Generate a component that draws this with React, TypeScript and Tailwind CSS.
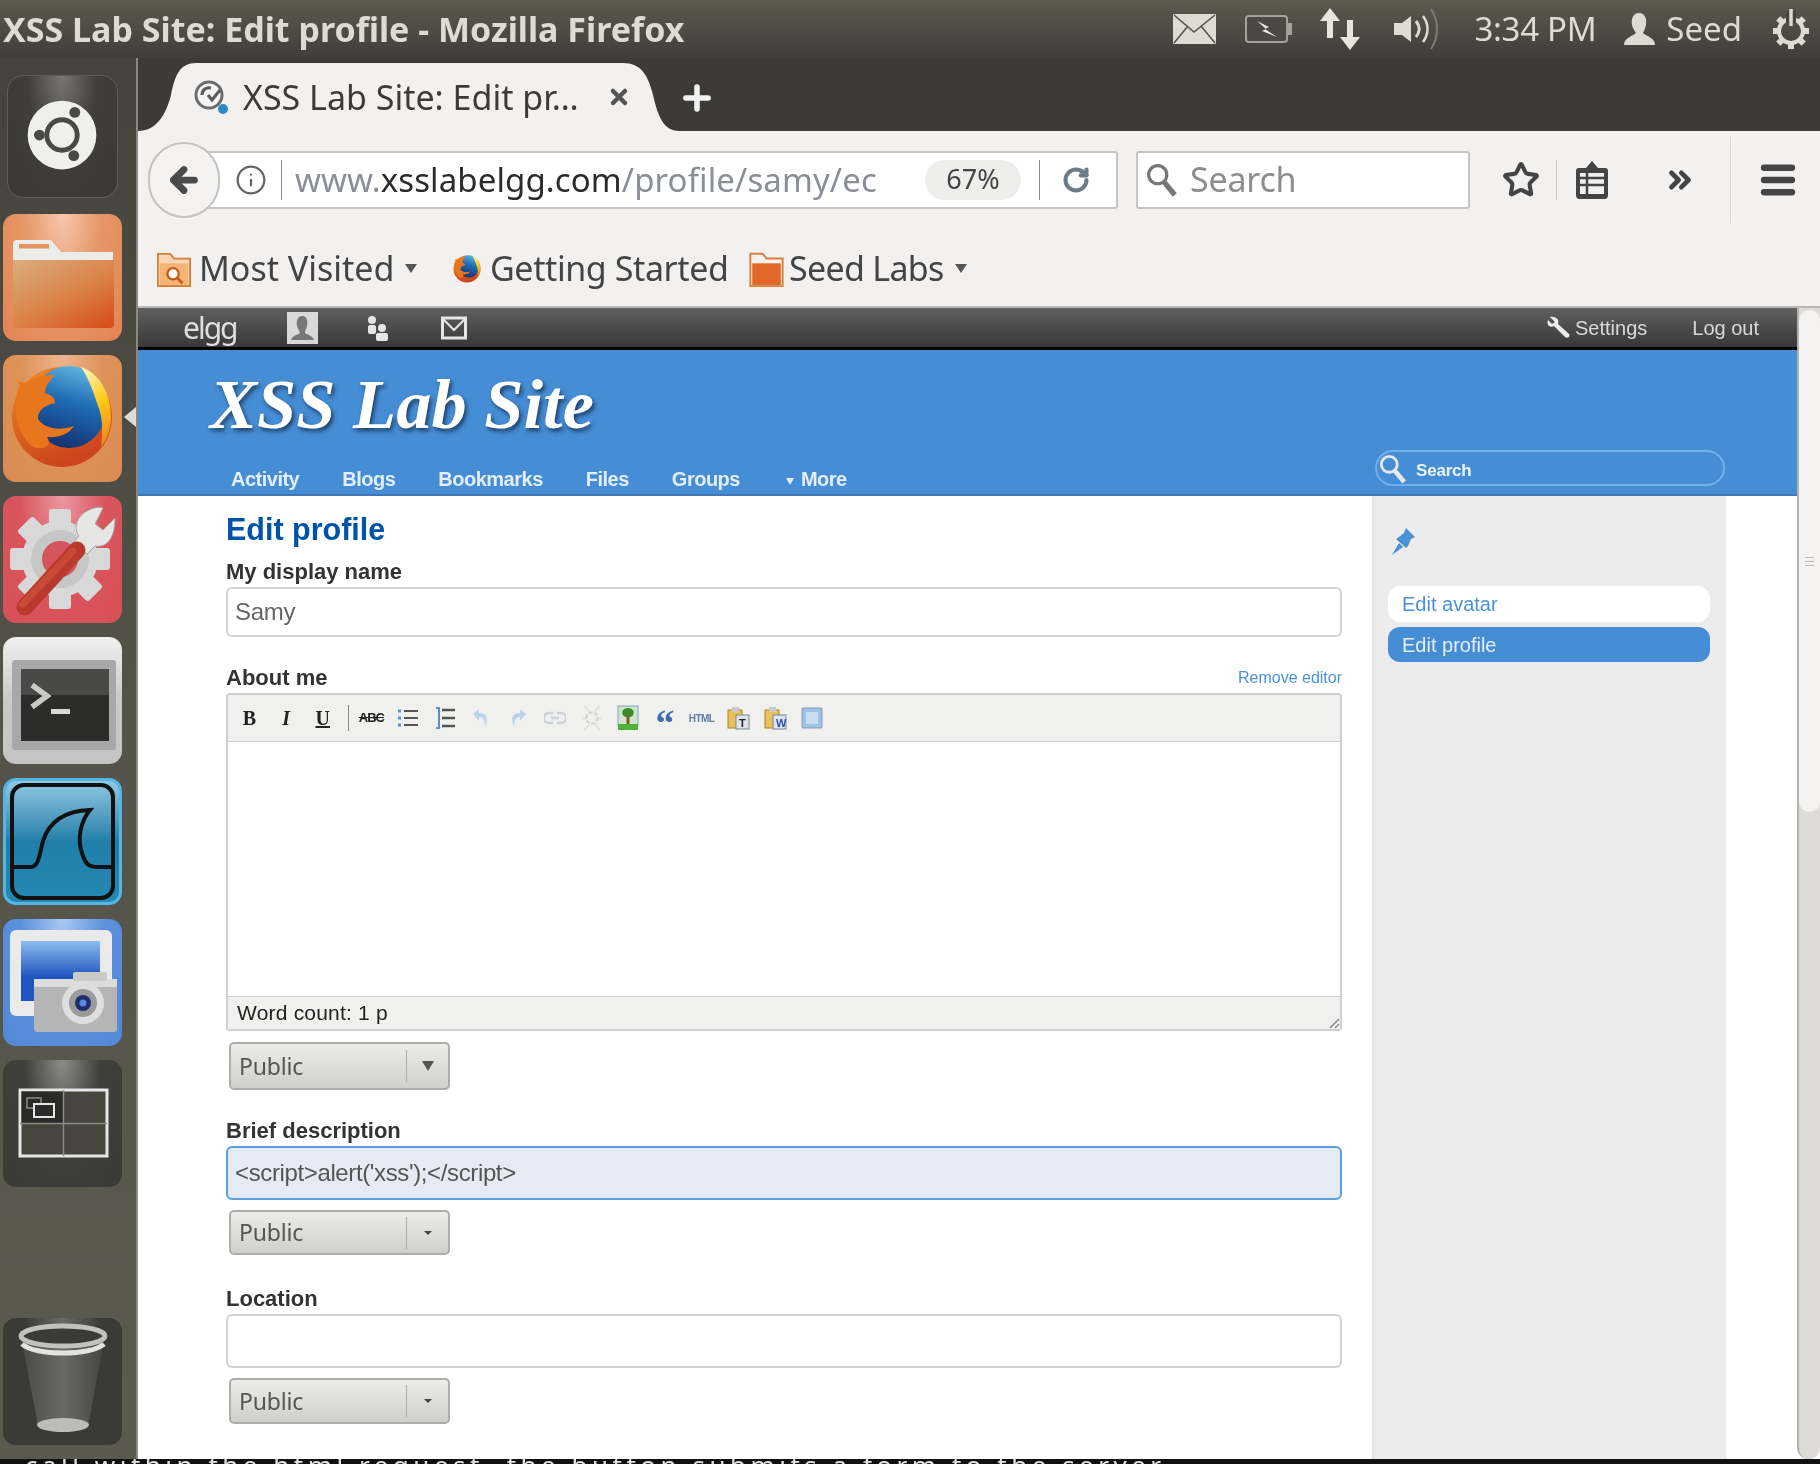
import type { ReactNode } from 'react'
import { Star, RotateCw, ChevronsRight, Info, Plus, Menu, ArrowLeft, X } from 'lucide-react'

const UI = "font-['Noto_Sans',sans-serif]"
const WEB = "font-['Liberation_Sans',Arial,sans-serif]"

function Tile({ className, children }: { className: string; children: ReactNode }) {
  return <div className={`h-[127px] w-[119px] shrink-0 overflow-hidden rounded-[13px] ${className}`}>{children}</div>
}

function TileSvg({ children }: { children: ReactNode }) {
  return (
    <svg viewBox="0 0 119 127" className="h-full w-full">
      {children}
    </svg>
  )
}

function Magnifier({ className, color }: { className: string; color: string }) {
  return (
    <svg viewBox="0 0 30 32" className={className}>
      <circle cx="11" cy="11" r="8.5" fill="none" stroke={color} strokeWidth="3" />
      <path d="M17 18L27 30" stroke={color} strokeWidth="5" />
    </svg>
  )
}

function FirefoxMark({ id }: { id: string }) {
  return (
    <>
      <defs>
        <linearGradient id={`${id}-b`} x1="0.7" y1="0" x2="0.4" y2="1">
          <stop offset="0" stopColor="#62b8e0" />
          <stop offset="0.45" stopColor="#1e6cb4" />
          <stop offset="1" stopColor="#14306f" />
        </linearGradient>
        <linearGradient id={`${id}-o`} x1="0" y1="0" x2="0.4" y2="1">
          <stop offset="0" stopColor="#ef8a1e" />
          <stop offset="1" stopColor="#cd451f" />
        </linearGradient>
        <linearGradient id={`${id}-y`} x1="0.3" y1="0" x2="0.6" y2="1">
          <stop offset="0" stopColor="#fff3b0" />
          <stop offset="0.5" stopColor="#fcc919" />
          <stop offset="1" stopColor="#ee8a1c" />
        </linearGradient>
      </defs>
      <circle cx="59" cy="62" r="50" fill={`url(#${id}-o)`} />
      <path d="M14 26L22 38L32 30Z" fill="#e8761d" />
      <ellipse cx="66" cy="52" rx="38" ry="41" fill={`url(#${id}-b)`} />
      <path d="M16 32C26 24 38 20 52 20C46 26 42 32 42 38C48 40 52 42 52 48C42 50 34 56 35 64C42 74 56 76 71 71C66 79 56 83 44 82C50 90 40 96 30 92C14 80 8 50 16 32Z" fill="#e8761d" />
      <path d="M78 12C96 18 108 38 108 62C108 74 104 84 98 92C100 76 100 62 94 48C90 36 86 24 78 12Z" fill={`url(#${id}-y)`} />
    </>
  )
}

function Launcher() {
  return (
    <aside className="relative flex w-[138px] shrink-0 flex-col gap-[14px] border-r-2 border-[#8a897f] bg-gradient-to-b from-[#44433d] via-[#55544a] to-[#5a5a4f] pb-[14px] pl-[3px] pt-[17px]">
      <div className="mb-[2px] ml-[4px] h-[123px] w-[111px] rounded-[16px] border border-[#5e5d58] bg-[radial-gradient(ellipse_at_50%_0%,#77766f_0%,#3f3e3b_45%,#3a3936_100%)]">
        <svg viewBox="0 0 111 123" className="h-full w-full">
          <circle cx="55" cy="60" r="35" fill="#efefee" />
          <circle cx="55" cy="60" r="15.5" fill="none" stroke="#4a4946" strokeWidth="5" />
          <circle cx="55" cy="60" r="20" fill="none" stroke="#efefee" strokeWidth="3" />
          <circle cx="32" cy="60" r="5.5" fill="#4a4946" />
          <circle cx="68" cy="37" r="5.5" fill="#4a4946" />
          <circle cx="67" cy="81" r="5.5" fill="#4a4946" />
        </svg>
      </div>

      <Tile className="bg-[radial-gradient(ellipse_at_50%_0%,#f6c7ad_0%,#e59767_45%,#e28552_100%)]">
        <TileSvg>
          <defs>
            <linearGradient id="fold" x1="0.1" y1="0" x2="0.9" y2="1">
              <stop offset="0" stopColor="#d9aa78" />
              <stop offset="0.55" stopColor="#db8146" />
              <stop offset="1" stopColor="#d6501c" />
            </linearGradient>
          </defs>
          <path d="M10 31C10 27 12 26 14 26H48L58 38H110V46H10Z" fill="#ececea" />
          <rect x="16" y="30" width="30" height="4.5" fill="#e5935f" />
          <path d="M10 46H111V110C111 112 110 114 107 114H14C11 114 10 112 10 110Z" fill="url(#fold)" />
        </TileSvg>
      </Tile>

      <Tile className="bg-[radial-gradient(ellipse_at_50%_0%,#eeb48e_0%,#dc9258_50%,#d98c52_100%)]">
        <TileSvg>
          <FirefoxMark id="ffl" />
        </TileSvg>
      </Tile>

      <Tile className="bg-[radial-gradient(ellipse_at_50%_0%,#eb98a0_0%,#d9565e_50%,#d74f55_100%)]">
        <TileSvg>
          <g fill="#d8d8d8">
            <circle cx="57" cy="63" r="38" />
            {[0, 45, 90, 135, 180, 225, 270, 315].map((a) => (
              <rect key={a} x="46" y="13" width="22" height="20" rx="3" transform={`rotate(${a} 57 63)`} />
            ))}
          </g>
          <circle cx="57" cy="63" r="29" fill="#c6c6c6" />
          <circle cx="57" cy="63" r="18" fill="#d4565c" />
          <path d="M84 15C74 20 70 32 76 40L71 46L84 58L92 50C104 52 112 42 112 22L100 34L92 28L100 12C96 10 90 12 84 15Z" fill="#e6e6e4" stroke="#a9a9a7" strokeWidth="1" />
          <path d="M22 111L74 54" stroke="#b83a2c" strokeWidth="17" strokeLinecap="round" />
          <path d="M20 108L70 55" stroke="#c94a36" strokeWidth="7" strokeLinecap="round" />
        </TileSvg>
      </Tile>

      <Tile className="bg-gradient-to-b from-[#f0f0f0] via-[#c9c9c9] to-[#c4c4c4]">
        <TileSvg>
          <rect x="9" y="23" width="104" height="90" rx="3" fill="#a8a8a8" />
          <rect x="18" y="32" width="88" height="72" fill="#2c2c2b" />
          <rect x="18" y="32" width="88" height="26" fill="#494947" />
          <path d="M29 48L44 59L29 70" fill="none" stroke="#c9c9c7" strokeWidth="5.5" />
          <rect x="48" y="72" width="19" height="5" fill="#d9d9d7" />
        </TileSvg>
      </Tile>

      <Tile className="border-[3px] border-[#55b6e6] bg-gradient-to-b from-[#8fc9e2] via-[#1f7fa9] to-[#2488b4]">
        <svg viewBox="0 0 113 121" className="h-full w-full">
          <rect x="6" y="4" width="101" height="113" rx="12" fill="none" stroke="#111" strokeWidth="4" />
          <path d="M6 86H24C33 86 33 75 37 60C43 41 58 30 84 29C75 40 70 58 77 75C80 84 84 86 92 86H107" fill="none" stroke="#111" strokeWidth="4" />
        </svg>
      </Tile>

      <Tile className="bg-[radial-gradient(ellipse_at_50%_0%,#a9c9f2_0%,#5a90dc_50%,#5288d6_100%)]">
        <TileSvg>
          <defs>
            <linearGradient id="scr" x1="0" y1="0" x2="0" y2="1">
              <stop offset="0" stopColor="#8dbcee" />
              <stop offset="0.6" stopColor="#1f55c0" />
            </linearGradient>
          </defs>
          <rect x="7" y="11" width="102" height="86" rx="6" fill="#eaeaea" />
          <rect x="18" y="22" width="79" height="60" fill="url(#scr)" />
          <rect x="31" y="60" width="83" height="53" rx="3" fill="#b5b5b5" />
          <rect x="31" y="60" width="83" height="8" fill="#dcdcdc" />
          <rect x="70" y="53" width="34" height="9" rx="2" fill="#c9c9c9" />
          <circle cx="80" cy="84" r="21" fill="#dedede" />
          <circle cx="80" cy="84" r="14" fill="#9b9b9b" />
          <circle cx="80" cy="84" r="8" fill="#1c2f6b" />
          <circle cx="80" cy="84" r="3.5" fill="#5a86e0" />
        </TileSvg>
      </Tile>

      <Tile className="bg-[radial-gradient(ellipse_at_50%_0%,#8c8c88_0%,#3f3f3c_45%,#3a3a37_100%)]">
        <TileSvg>
          <rect x="17" y="30" width="87" height="66" fill="#46463f" stroke="#e6e6e6" strokeWidth="3" />
          <rect x="18.5" y="31.5" width="42" height="32" fill="#2a2a28" />
          <path d="M60.5 30V96M17 63.5H104" stroke="#8a8a86" strokeWidth="1.5" />
          <rect x="24" y="38" width="14" height="10" fill="none" stroke="#8a8a86" strokeWidth="1.5" />
          <rect x="31" y="44" width="20" height="13" fill="#2a2a28" stroke="#e6e6e6" strokeWidth="2" />
        </TileSvg>
      </Tile>

      <Tile className="mt-auto bg-[radial-gradient(ellipse_at_50%_0%,#6b6b67_0%,#3a3a37_45%,#3a3a37_100%)]">
        <TileSvg>
          <defs>
            <linearGradient id="bin" x1="0" y1="0" x2="1" y2="0">
              <stop offset="0" stopColor="#4a4a45" />
              <stop offset="0.5" stopColor="#6a6a64" />
              <stop offset="1" stopColor="#45453f" />
            </linearGradient>
          </defs>
          <path d="M18 18L35 108H85L102 18Z" fill="url(#bin)" />
          <ellipse cx="60" cy="107" rx="26" ry="7" fill="#bdbdb8" />
          <ellipse cx="60" cy="18" rx="42" ry="10" fill="#3a3a37" stroke="#c2c2bd" strokeWidth="5" />
          <path d="M19 26C32 38 88 38 101 26" fill="none" stroke="#e2e2de" strokeWidth="5" />
        </TileSvg>
      </Tile>

      <div className="absolute left-[124px] top-[349px] h-0 w-0 border-y-[10px] border-r-[12px] border-y-transparent border-r-[#dcdcd8]" />
    </aside>
  )
}

function PanelGear() {
  return (
    <svg viewBox="0 0 38 40" className="ml-[30px] mr-[10px] h-[40px] w-[38px]">
      <g fill="#dedbd3">
        {[45, 90, 135, 180, 225, 270, 315].map((a) => (
          <rect key={a} x="16" y="4" width="6" height="7" transform={`rotate(${a} 19 22)`} />
        ))}
      </g>
      <circle cx="19" cy="22" r="12" fill="none" stroke="#dedbd3" strokeWidth="4" />
      <rect x="14" y="2" width="10" height="12" fill="#46453f" />
      <path d="M19 0V17" stroke="#dedbd3" strokeWidth="3.5" />
    </svg>
  )
}

function TopPanel() {
  return (
    <header className={`flex h-[58px] shrink-0 items-center bg-gradient-to-b from-[#5d5a4e] to-[#3f3e39] pl-[3px] text-[#dfdbd2] ${UI}`}>
      <span className="whitespace-nowrap text-[34px] font-bold">XSS Lab Site: Edit profile - Mozilla Firefox</span>
      <div className="ml-auto flex items-center">
        <svg viewBox="0 0 43 30" className="h-[30px] w-[43px]">
          <rect width="43" height="30" rx="1" fill="#dedbd3" />
          <path d="M1 1L21 18L42 1M1 29L15 12M42 29L28 12" fill="none" stroke="#55534b" strokeWidth="1.6" />
        </svg>
        <svg viewBox="0 0 48 30" className="ml-[29px] h-[30px] w-[48px]">
          <rect x="1" y="2" width="41" height="26" rx="3" fill="#4a4943" stroke="#a3a198" strokeWidth="2" />
          <rect x="42" y="9" width="5" height="12" fill="#a3a198" />
          <path d="M12 7L24 13L20 15L32 23L17 17L21 15Z" fill="#e8e5dd" />
        </svg>
        <svg viewBox="0 0 42 42" className="ml-[27px] h-[42px] w-[42px]">
          <path d="M10 0L20 13H13V30H7V13H0Z M30 42L20 29H27V12H33V29H40Z" fill="#e8e5dd" />
        </svg>
        <svg viewBox="0 0 45 44" className="ml-[32px] h-[44px] w-[45px]">
          <path d="M0 16H8L17 9V35L8 28H0Z" fill="#dedbd3" />
          <path d="M22 14C26 19 26 25 22 30" fill="none" stroke="#dedbd3" strokeWidth="3" />
          <path d="M29 9C35 17 35 27 29 35" fill="none" stroke="#dedbd3" strokeWidth="2.5" />
          <path d="M37 2C45 14 45 30 37 42" fill="none" stroke="#7d7b73" strokeWidth="2" />
        </svg>
        <span className="ml-[36px] whitespace-nowrap text-[33px] tracking-[-0.3px]">3:34 PM</span>
        <svg viewBox="0 0 31 32" className="ml-[28px] h-[32px] w-[31px]">
          <path d="M15 0C21 0 23 6 22 12C21 16 20 18 19 20C24 24 31 25 31 32H0C0 25 7 24 12 20C11 18 9 16 8 12C7 6 9 0 15 0Z" fill="#dedbd3" />
        </svg>
        <span className="ml-[11px] text-[33px]">Seed</span>
        <PanelGear />
      </div>
    </header>
  )
}

function TabStrip() {
  return (
    <div className={`flex h-[73px] shrink-0 items-end bg-[#3c3b37] ${UI}`}>
      <div className="relative flex h-[68px] w-[541px] items-center pl-[56px]">
        <svg viewBox="0 0 541 68" className="absolute inset-0 h-full w-full">
          <path d="M0 68C18 68 28 52 33 32C37 12 42 0 58 0L485 0C503 0 510 12 515 32C520 54 526 68 541 68Z" fill="#f2f1f0" />
        </svg>
        <svg viewBox="0 0 34 38" className="relative h-[38px] w-[34px]">
          <circle cx="15" cy="17" r="13" fill="#f4f4f4" stroke="#6c6c6c" strokeWidth="3" />
          <path d="M8 17C8 12 12 9 17 10M14 17L18 22L26 12" fill="none" stroke="#5a5a5a" strokeWidth="3" />
          <circle cx="29" cy="31" r="5" fill="#2f88c8" />
        </svg>
        <span className="relative ml-[15px] w-[345px] whitespace-nowrap text-[34px] text-[#3c3b37]">XSS Lab Site: Edit pr…</span>
        <X className="relative ml-[19px] h-[24px] w-[24px] text-[#555]" strokeWidth={4.5} />
      </div>
      <Plus className="mb-[14px] ml-[-1px] h-[38px] w-[38px] text-[#f3f3f3]" strokeWidth={3.5} />
    </div>
  )
}

function NavBar() {
  return (
    <div className={`flex h-[97px] shrink-0 items-center bg-[#f2f1f0] pl-[10px] ${UI}`}>
      <div className="z-10 flex h-[76px] w-[72px] shrink-0 items-center justify-center rounded-full border-2 border-[#c4c3c0] bg-[#f4f3f2]">
        <ArrowLeft className="h-[40px] w-[36px] text-[#4a4a4a]" strokeWidth={4.5} />
      </div>
      <div className="-ml-[20px] flex h-[58px] w-[918px] items-center rounded-[3px] border-2 border-[#c6c5c1] bg-white pl-[33px]">
        <Info className="h-[34px] w-[32px] text-[#666]" strokeWidth={1.7} />
        <div className="ml-[14px] h-[40px] w-[1px] bg-[#8c8c8c]" />
        <span className="ml-[13px] w-[582px] overflow-hidden whitespace-nowrap text-[33px] tracking-[0.1px] text-[#8a8f96]">
          www.<span className="text-[#2b2b2b]">xsslabelgg.com</span>/profile/samy/ec
        </span>
        <span className="ml-[48px] flex h-[40px] w-[96px] items-center justify-center rounded-full bg-[#eeeeed] text-[27px] text-[#444]">67%</span>
        <div className="ml-[18px] h-[40px] w-[1px] bg-[#8c8c8c]" />
        <RotateCw className="ml-[22px] h-[32px] w-[28px] text-[#6a7b8a]" strokeWidth={3.5} />
      </div>
      <div className="ml-[18px] flex h-[58px] w-[334px] items-center rounded-[3px] border-2 border-[#c6c5c1] bg-white pl-[8px]">
        <Magnifier className="h-[36px] w-[32px]" color="#777" />
        <span className="ml-[12px] text-[34px] tracking-[-0.2px] text-[#8d8d8d]">Search</span>
      </div>
      <Star className="ml-[32px] h-[38px] w-[38px] text-[#444]" strokeWidth={2.6} />
      <div className="ml-[16px] h-[40px] w-[1px] bg-[#cfcecb]" />
      <svg viewBox="0 0 32 38" className="ml-[19px] h-[38px] w-[32px]">
        <path d="M16 0L22 7H29C31 7 32 8 32 10V34C32 36 31 38 29 38H3C1 38 0 36 0 34V10C0 8 1 7 3 7H10Z" fill="#444" />
        <path d="M4 12H28V33H4Z" fill="#f2f1f0" />
        <path d="M4 17H28M4 24H28M11 12V33" stroke="#444" strokeWidth="2.5" />
      </svg>
      <ChevronsRight className="ml-[55px] h-[36px] w-[34px] text-[#444]" strokeWidth={3.4} />
      <div className="ml-[33px] h-[86px] w-[1px] bg-[#dcdbd8]" />
      <Menu className="ml-[26px] h-[44px] w-[42px] text-[#444]" strokeWidth={3.6} />
    </div>
  )
}

function Caret() {
  return <span className="ml-[10px] h-0 w-0 border-x-[6px] border-t-[9px] border-x-transparent border-t-[#555]" />
}

function FolderIcon({ className, badge }: { className: string; badge?: boolean }) {
  return (
    <svg viewBox="0 0 36 40" className={className}>
      <path d="M1 4H14L18 9H35V38H1Z" fill={badge ? '#f9d7b6' : '#f4f2ee'} stroke="#d8803a" strokeWidth="2" />
      <rect x="3" y="14" width="30" height="23" fill={badge ? '#f5b375' : '#e2682a'} />
      {badge ? <circle cx="17" cy="25" r="6" fill="#fff" stroke="#c8571c" strokeWidth="2.5" /> : null}
      {badge ? <path d="M21 29L27 35" stroke="#c8571c" strokeWidth="3" /> : null}
    </svg>
  )
}

function BookmarkBar() {
  return (
    <div className={`flex h-[80px] shrink-0 items-center border-b-2 border-[#b9b8b4] bg-[#f2f1f0] pl-[19px] pt-[3px] text-[#444] ${UI}`}>
      <FolderIcon className="h-[40px] w-[34px]" badge />
      <span className="ml-[8px] w-[196px] whitespace-nowrap text-[34px]">Most Visited</span>
      <Caret />
      <svg viewBox="0 0 118 124" className="ml-[34px] h-[38px] w-[32px]">
        <FirefoxMark id="ffb" />
      </svg>
      <span className="ml-[7px] w-[237px] whitespace-nowrap text-[34px] tracking-[-0.4px]">Getting Started</span>
      <FolderIcon className="ml-[21px] h-[38px] w-[37px]" />
      <span className="ml-[4px] w-[156px] whitespace-nowrap text-[34px] tracking-[-0.7px]">Seed Labs</span>
      <Caret />
    </div>
  )
}

function ToolCell({ children }: { children: ReactNode }) {
  return <div className="flex w-[36.7px] shrink-0 items-center justify-center">{children}</div>
}

function PasteIcon({ letter, color }: { letter: string; color: string }) {
  return (
    <svg viewBox="0 0 24 24" className="h-[24px] w-[24px]">
      <rect x="2" y="4" width="14" height="18" fill="#e8c258" stroke="#a8842c" />
      <rect x="6" y="1" width="7" height="5" fill="#c9c9c9" />
      <rect x="10" y="9" width="13" height="14" fill="#dfe4ec" stroke="#7a8598" />
      <text x="13" y="21" fontSize="11" fontWeight="700" fill={color}>{letter}</text>
    </svg>
  )
}

function EditorToolbar() {
  return (
    <div className="flex h-[47px] items-center border-b border-[#cfcfcf] bg-[#f0f0ee] pl-[3px] text-[#222]">
      <ToolCell><span className="font-['Liberation_Serif',serif] text-[20px] font-bold">B</span></ToolCell>
      <ToolCell><span className="font-['Liberation_Serif',serif] text-[20px] font-bold italic">I</span></ToolCell>
      <ToolCell><span className="font-['Liberation_Serif',serif] text-[20px] font-bold underline">U</span></ToolCell>
      <div className="ml-[7px] mr-[4px] h-[26px] w-[1px] bg-[#888]" />
      <ToolCell><span className="text-[13px] font-bold tracking-[-1px] line-through">ABC</span></ToolCell>
      <ToolCell>
        <svg viewBox="0 0 22 22" className="h-[22px] w-[22px]">
          <path d="M7 4H21M7 11H21M7 18H21" stroke="#555" strokeWidth="2" />
          <path d="M1 4H4M1 11H4M1 18H4" stroke="#5a8fd0" strokeWidth="3" />
        </svg>
      </ToolCell>
      <ToolCell>
        <svg viewBox="0 0 22 24" className="h-[24px] w-[22px]">
          <path d="M8 4H21M8 12H21M8 20H21" stroke="#555" strokeWidth="2.5" />
          <path d="M2 2H5V22H2" fill="none" stroke="#5a8fd0" strokeWidth="2" />
        </svg>
      </ToolCell>
      <ToolCell>
        <svg viewBox="0 0 20 24" className="h-[24px] w-[20px]">
          <path d="M2 8L8 3V7C15 7 18 11 14 21C14 14 12 11 8 11V15Z" fill="#bcd3ee" />
        </svg>
      </ToolCell>
      <ToolCell>
        <svg viewBox="0 0 20 24" className="h-[24px] w-[20px]">
          <path d="M18 8L12 3V7C5 7 2 11 6 21C6 14 8 11 12 11V15Z" fill="#bcd3ee" />
        </svg>
      </ToolCell>
      <ToolCell>
        <svg viewBox="0 0 22 14" className="h-[14px] w-[22px]">
          <path d="M9 2H5A5 5 0 0 0 5 12H9M13 2H17A5 5 0 0 1 17 12H13M7 7H15" fill="none" stroke="#ccd3da" strokeWidth="2.5" />
        </svg>
      </ToolCell>
      <ToolCell>
        <svg viewBox="0 0 22 30" className="h-[28px] w-[22px]">
          <path d="M3 2L8 8M19 2L14 8M3 28L8 22M19 28L14 22M1 15H6M16 15H21" stroke="#dadada" strokeWidth="1.5" />
          <circle cx="11" cy="15" r="6" fill="none" stroke="#d3d3d3" strokeWidth="2.5" strokeDasharray="4 2" />
        </svg>
      </ToolCell>
      <ToolCell>
        <svg viewBox="0 0 22 26" className="h-[26px] w-[22px]">
          <rect x="1" y="1" width="20" height="20" fill="#cfe5cb" stroke="#7aa8c4" />
          <path d="M11 3C16 3 18 7 16 10C15 13 7 13 6 10C4 7 6 3 11 3Z" fill="#3d8a2a" />
          <rect x="9.5" y="11" width="3" height="9" fill="#7a5a2a" />
          <rect x="1" y="19" width="20" height="6" fill="#4fb03a" />
        </svg>
      </ToolCell>
      <ToolCell><span className="mt-[10px] font-['Liberation_Serif',serif] text-[38px] font-bold leading-[1px] text-[#3d6daa]">“</span></ToolCell>
      <ToolCell><span className="text-[10px] font-bold tracking-[-0.5px] text-[#5e7ea8]">HTML</span></ToolCell>
      <ToolCell><PasteIcon letter="T" color="#222" /></ToolCell>
      <ToolCell><PasteIcon letter="W" color="#2a55b0" /></ToolCell>
      <ToolCell>
        <svg viewBox="0 0 22 22" className="h-[22px] w-[22px]">
          <rect x="1" y="1" width="20" height="20" rx="1" fill="#9cc2ea" stroke="#8b9bb0" />
          <rect x="5" y="5" width="12" height="12" fill="#c8dcf2" />
        </svg>
      </ToolCell>
    </div>
  )
}

function AccessSelect({ big, tall }: { big?: boolean; tall?: boolean }) {
  return (
    <div className={`ml-[3px] flex w-[221px] items-center rounded-[5px] border-2 border-[#adadaa] bg-gradient-to-b from-[#ececea] to-[#cfcfcc] ${big ? 'mt-[11px] h-[48px]' : tall ? 'mt-[10px] h-[46px]' : 'mt-[10px] h-[45px]'} ${UI}`}>
      <span className="ml-[8px] w-[167px] text-[23px] tracking-[-0.2px] text-[#555]">Public</span>
      <div className="h-[32px] w-[1px] bg-[#aaa]" />
      <div className="flex flex-1 justify-center">
        {big ? (
          <span className="h-0 w-0 border-x-[6px] border-t-[10px] border-x-transparent border-t-[#555]" />
        ) : (
          <span className="h-0 w-0 border-x-[4px] border-t-[4px] border-x-transparent border-t-[#444]" />
        )}
      </div>
    </div>
  )
}

function FieldLabel({ children, className = '' }: { children: ReactNode; className?: string }) {
  return <div className={`h-[26px] text-[22px] font-bold leading-[26px] text-[#333] ${className}`}>{children}</div>
}

function ElggBar() {
  return (
    <div className={`flex h-[42px] shrink-0 items-center border-b-[3px] border-black bg-gradient-to-b from-[#606060] to-[#383838] pl-[45px] ${WEB}`}>
      <span className="w-[60px] font-['Noto_Sans',sans-serif] text-[30px] leading-[30px] tracking-[-2px] text-[#dedede]">elgg</span>
      <svg viewBox="0 0 31 32" className="ml-[44px] h-[32px] w-[31px]">
        <rect width="31" height="32" fill="#d9d9d9" />
        <path d="M15 4C20 4 21 9 20 14C19 18 18 19 18 21C21 23 26 24 27 28H4C5 24 10 23 13 21C13 19 11 18 10 14C9 9 11 4 15 4Z" fill="#777" />
      </svg>
      <svg viewBox="0 0 26 26" className="ml-[46px] h-[26px] w-[26px]">
        <circle cx="8" cy="5" r="4" fill="#e6e6e6" />
        <rect x="4" y="10" width="8" height="9" rx="2" fill="#e6e6e6" />
        <circle cx="18" cy="13" r="4" fill="#e6e6e6" />
        <rect x="12" y="18" width="12" height="8" rx="2" fill="#e6e6e6" />
      </svg>
      <svg viewBox="0 0 26 24" className="ml-[51px] h-[24px] w-[26px]">
        <rect x="1.5" y="2" width="23" height="20" fill="none" stroke="#e6e6e6" strokeWidth="3" />
        <path d="M2 3L13 14L24 3" fill="none" stroke="#e6e6e6" strokeWidth="2" />
      </svg>
      <div className="ml-auto flex items-center pr-[38px] text-[20px] text-[#d9d9d9]">
        <svg viewBox="0 0 26 24" className="h-[24px] w-[26px]">
          <path d="M4 1L9 6L6 8L2 4C0 9 4 12 8 10L18 20C21 24 26 20 22 17L12 8C14 3 9 0 4 1Z" fill="#eee" />
        </svg>
        <span className="ml-[3px]">Settings</span>
        <span className="ml-[45px]">Log out</span>
      </div>
    </div>
  )
}

const NAV_ITEMS = ['Activity', 'Blogs', 'Bookmarks', 'Files', 'Groups']

function SiteHeader() {
  return (
    <div className={`relative h-[146px] shrink-0 border-b-2 border-[#3f78b4] bg-[#458dd5] ${WEB}`}>
      <div className="pl-[72px] pt-[16px] font-['Liberation_Serif',serif] text-[70.5px] font-bold italic leading-[76px] text-white [text-shadow:2px_3px_4px_#1c3f66]">XSS Lab Site</div>
      <div className="absolute bottom-[2px] left-[93px] flex gap-[43px] text-[20px] font-bold leading-[26px] tracking-[-0.5px] text-[#e3eef9]">
        {NAV_ITEMS.map((item) => (
          <span key={item}>{item}</span>
        ))}
        <span className="ml-[3px] flex items-center">
          <span className="mr-[7px] mt-[4px] h-0 w-0 border-x-[4px] border-t-[7px] border-x-transparent border-t-[#e3eef9]" />
          More
        </span>
      </div>
      <div className="absolute left-[1237px] top-[100px] flex h-[36px] w-[350px] items-center rounded-[18px] border-2 border-[#71b0ec] pl-[2px] pt-[1px]">
        <Magnifier className="h-[30px] w-[28px]" color="#e8e8e8" />
        <span className="ml-[9px] mt-[4px] text-[17px] font-bold tracking-[-0.2px] text-[#eef4fb]">Search</span>
      </div>
    </div>
  )
}

function TextField({ value, active, className = '' }: { value?: string; active?: boolean; className?: string }) {
  return (
    <div
      className={`flex items-center rounded-[6px] border-2 pl-[7px] text-[24px] ${
        active ? 'border-[#5a9ee0] bg-[#e4ebf5] tracking-[-0.37px] text-[#555]' : 'border-[#d2d2d2] bg-white tracking-[-0.3px] text-[#666]'
      } ${className}`}
    >
      {value}
    </div>
  )
}

function ProfileForm() {
  return (
    <main className={`ml-[88px] w-[1116px] shrink-0 pt-[13px] ${WEB}`}>
      <h1 className="h-[40px] text-[30.5px] font-bold leading-[40px] text-[#0054a7]">Edit profile</h1>
      <FieldLabel className="mt-[10px]">My display name</FieldLabel>
      <TextField value="Samy" className="mt-[2px] h-[50px]" />

      <div className="mt-[28px] flex h-[26px] items-center justify-between">
        <FieldLabel>About me</FieldLabel>
        <span className="text-[16px] text-[#4a92da]">Remove editor</span>
      </div>
      <div className="mt-[2px] rounded-[4px] border-2 border-[#cfcfcf]">
        <EditorToolbar />
        <div className="h-[254px] bg-white" />
        <div className="relative flex h-[33px] items-center border-t border-[#cfcfcf] bg-[#f0f0ee] pl-[9px] text-[21px] tracking-[0.2px] text-[#222]">
          Word count: 1 p
          <svg viewBox="0 0 12 12" className="absolute bottom-0 right-0 h-[12px] w-[12px]">
            <path d="M11 2L2 11M11 7L7 11" stroke="#888" strokeWidth="1.5" />
          </svg>
        </div>
      </div>
      <AccessSelect big />

      <FieldLabel className="mt-[28px]">Brief description</FieldLabel>
      <TextField value="<script>alert('xss');</script>" active className="mt-[2px] h-[54px]" />
      <AccessSelect />

      <FieldLabel className="mt-[31px]">Location</FieldLabel>
      <TextField className="mt-[2px] h-[54px]" />
      <AccessSelect tall />
    </main>
  )
}

function Sidebar() {
  return (
    <aside className={`ml-[30px] w-[354px] shrink-0 border-l-2 border-[#e4e4e4] bg-[#ececec] pl-[14px] pr-[16px] pt-[32px] text-[20px] ${WEB}`}>
      <svg viewBox="0 0 24 27" className="ml-[3px] h-[27px] w-[24px]">
        <path d="M15 0L24 9L20 11L17 18L15 20L5 11L8 9L13 5ZM8 15L12 19L1 27Z" fill="#4a92d8" />
      </svg>
      <div className="mt-[31px] flex h-[36px] items-center rounded-[12px] bg-white pl-[14px] text-[#4a92da]">Edit avatar</div>
      <div className="mt-[5px] flex h-[35px] items-center rounded-[12px] bg-[#458dd5] pl-[14px] text-[#e3eef9]">Edit profile</div>
    </aside>
  )
}

function PageScrollbar() {
  return (
    <div className="w-[23px] shrink-0 rounded-b-[12px] border-l-2 border-[#b5b3af] bg-[#dedcd9]">
      <div className="mt-[2px] flex h-[502px] flex-col items-center justify-center gap-[3px] rounded-[11px] bg-[#f4f3f1]">
        <span className="h-[1px] w-[9px] bg-[#bbb]" />
        <span className="h-[1px] w-[9px] bg-[#bbb]" />
        <span className="h-[1px] w-[9px] bg-[#bbb]" />
      </div>
    </div>
  )
}

export default function App() {
  return (
    <div className="flex h-[1464px] w-[1820px] flex-col overflow-hidden bg-black blur-[0.6px]">
      <TopPanel />
      <div className="flex min-h-0 flex-1">
        <Launcher />
        <div className="flex min-w-0 flex-1 flex-col bg-white">
          <TabStrip />
          <NavBar />
          <BookmarkBar />
          <div className="flex min-h-0 flex-1">
            <div className="flex min-w-0 flex-1 flex-col">
              <ElggBar />
              <SiteHeader />
              <div className="flex min-h-0 flex-1">
                <ProfileForm />
                <Sidebar />
              </div>
            </div>
            <PageScrollbar />
          </div>
        </div>
      </div>
      <div className="relative h-[5px] shrink-0 overflow-hidden bg-[#111]">
        <div className={`absolute left-[25px] top-[-9px] whitespace-nowrap text-[26px] leading-[30px] tracking-[4.5px] text-[#e0e0e0] ${UI}`}>call within the html request, the button submits a form to the server</div>
      </div>
    </div>
  )
}
